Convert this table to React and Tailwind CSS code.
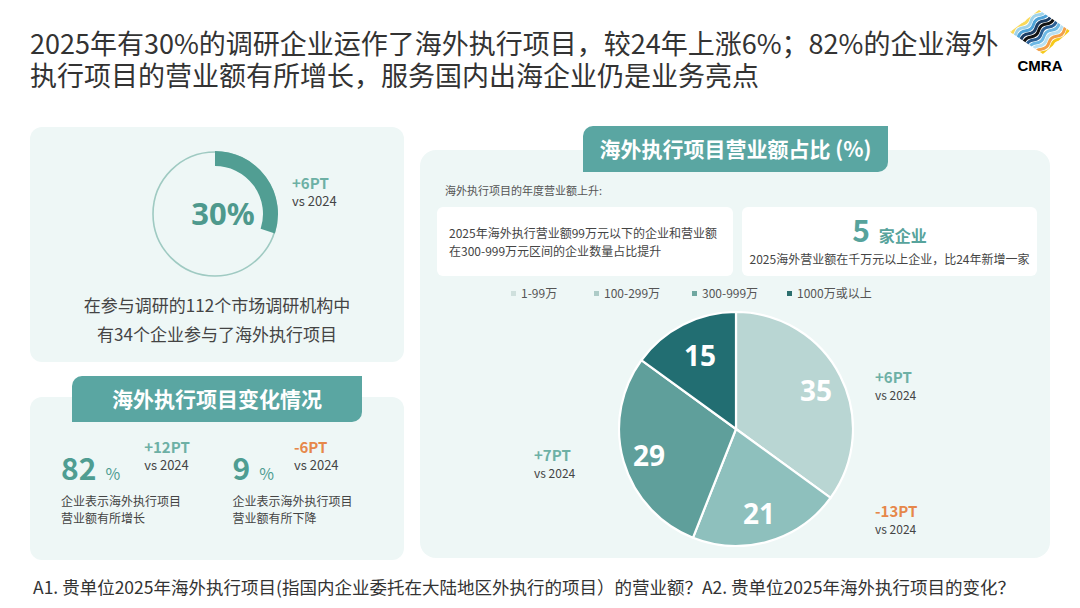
import React from 'react'

const font = "font-['Noto_Sans_CJK_SC','Noto_Sans',sans-serif]"

function Logo() {
  const stripes = [
    ['#f6c91a', -22],
    ['#f9d95a', -18],
    ['#9fd3ea', -14],
    ['#4fa3d8', -10],
    ['#1d3f66', -6],
    ['#111111', -2],
    ['#2b5f94', 2],
    ['#6db8e4', 6],
    ['#b9e0f2', 10],
    ['#f3a04a', 14],
    ['#f6c91a', 18],
    ['#fbe08a', 22],
  ]
  return (
    <div className="flex flex-col items-center w-[64px]">
      <svg width="60" height="44" viewBox="0 0 60 44">
        <defs>
          <clipPath id="dia">
            <polygon points="29,0 60,21 33,44 0,22" />
          </clipPath>
        </defs>
        <g clipPath="url(#dia)">
          <g transform="rotate(-40 30 22)">
            {stripes.map(([c, o], i) => (
              <path
                key={i}
                d={`M-30 ${22 + o} q 5 -3.5 10 0 t 10 0 t 10 0 t 10 0 t 10 0 t 10 0 t 10 0 t 10 0 t 10 0 t 10 0 t 10 0 t 10 0`}
                stroke={c}
                strokeWidth="3"
                fill="none"
              />
            ))}
          </g>
        </g>
      </svg>
      <div className="font-['Liberation_Sans',sans-serif] font-bold text-[15px] leading-[16px] text-black mt-[4px]">CMRA</div>
    </div>
  )
}

function Donut() {
  return (
    <svg width="130" height="130" viewBox="0 0 130 130">
      <circle cx="65" cy="65" r="62" fill="none" stroke="#9fcac2" strokeWidth="1.6" />
      <path d="M65 9.5 A55.5 55.5 0 0 1 117.78 82.15" fill="none" stroke="#519e93" strokeWidth="15" />
      <text x="73" y="64" textAnchor="middle" dominantBaseline="central" fontSize="31" fontWeight="700" fill="#4e998d" fontFamily="Noto Sans, sans-serif">30%</text>
    </svg>
  )
}

const slices = [
  { v: 35, c: '#b9d6d3', lx: 198, ly: 79 },
  { v: 21, c: '#8ec0bd', lx: 141, ly: 202 },
  { v: 29, c: '#5f9f9b', lx: 31, ly: 144 },
  { v: 15, c: '#226e72', lx: 82, ly: 44 },
]

function Pie() {
  const cx = 118, cy = 118, r = 117
  let acc = 0
  const pt = (a) => [cx + r * Math.sin(a * Math.PI / 180), cy - r * Math.cos(a * Math.PI / 180)]
  return (
    <svg width="236" height="236" viewBox="0 0 236 236">
      {slices.map((s, i) => {
        const a0 = acc * 3.6
        acc += s.v
        const a1 = acc * 3.6
        const [x0, y0] = pt(a0)
        const [x1, y1] = pt(a1)
        const large = a1 - a0 > 180 ? 1 : 0
        return (
          <path key={i} d={`M${cx} ${cy} L${x0} ${y0} A${r} ${r} 0 ${large} 1 ${x1} ${y1} Z`} fill={s.c} stroke="#ffffff" strokeWidth="2.2" strokeLinejoin="round" />
        )
      })}
      {slices.map((s, i) => (
        <text key={i} x={s.lx} y={s.ly} textAnchor="middle" dominantBaseline="central" fontSize="28" fontWeight="700" fill="#ffffff" fontFamily="Noto Sans, sans-serif">{s.v}</text>
      ))}
    </svg>
  )
}

function Delta({ value, up = true, size = 'text-[15px]', sub = 'text-[13px]' }) {
  return (
    <div className="flex flex-col">
      <div className={`${size} leading-[18px] font-bold ${up ? 'text-[#6db0a5]' : 'text-[#e6874a]'}`}>{value}</div>
      <div className={`${sub} leading-[18px] text-[#444]`}>vs 2024</div>
    </div>
  )
}

function Change({ num, delta, up, lines }) {
  return (
    <div className="w-[179px] flex flex-col">
      <div className="flex items-start">
        <div className="flex items-baseline mt-[14px]">
          <span className="text-[30px] leading-[30px] font-bold text-[#4f9d92]">{num}</span>
          <span className="text-[16px] text-[#4f9d92] ml-[9px]">%</span>
        </div>
        <div className={num.length > 1 ? 'ml-[24px]' : 'ml-[20px]'}>
          <Delta value={delta} up={up} />
        </div>
      </div>
      <div className="mt-[7px] text-[12px] leading-[17px] text-[#444]">
        {lines.map((l) => <div key={l}>{l}</div>)}
      </div>
    </div>
  )
}

export default function App() {
  const legend = [
    ['1-99万', '#cfe0dd', 'w-[83px]'],
    ['100-299万', '#adcbc7', 'w-[98px]'],
    ['300-999万', '#6fa7a0', 'w-[95px]'],
    ['1000万或以上', '#2c6f6e', ''],
  ]

  return (
    <div className={`w-[1080px] h-[608px] bg-white overflow-hidden ${font}`}>
      {/* header */}
      <div className="h-[126px] flex justify-between pl-[30px] pr-[8px] pt-[27px]">
        <h1 className="text-[27px] leading-[32px] text-[#333] font-normal">
          <div className="whitespace-nowrap">2025年有30%的调研企业运作了海外执行项目，较24年上涨6%；82%的企业海外</div>
          <div className="whitespace-nowrap">执行项目的营业额有所增长，服务国内出海企业仍是业务亮点</div>
        </h1>
        <div className="-mt-[17px]">
          <Logo />
        </div>
      </div>

      <div className="flex pl-[30px]">
        {/* left column */}
        <div className="w-[374px] flex flex-col">
          <div className="mt-[1px] h-[235px] rounded-xl bg-[#eef7f6] flex flex-col">
            <div className="flex pl-[120px] pt-[22px]">
              <Donut />
              <div className="ml-[12px] mt-[25px]">
                <Delta value="+6PT" />
              </div>
            </div>
            <div className="mt-[11px] text-center text-[17px] leading-[29px] text-[#444]">
              <div>在参与调研的112个市场调研机构中</div>
              <div>有34个企业参与了海外执行项目</div>
            </div>
          </div>

          <div className="mt-[14px] relative z-10 ml-[42px] w-[290px] h-[46px] bg-[#5aa6a2] rounded-tl-[10px] rounded-br-[10px] flex items-center justify-center text-white text-[21px] font-bold">
            海外执行项目变化情况
          </div>
          <div className="-mt-[25px] h-[163px] rounded-xl bg-[#eef7f6] pl-[31px] pt-[41px] flex">
            <Change num="82" delta="+12PT" up lines={['企业表示海外执行项目', '营业额有所增长']} />
            <Change num="9" delta="-6PT" up={false} lines={['企业表示海外执行项目', '营业额有所下降']} />
          </div>
        </div>

        {/* right column */}
        <div className="ml-[16px] w-[630px] flex flex-col">
          <div className="relative z-10 ml-[163px] w-[305px] h-[46px] bg-[#5aa6a2] rounded-tl-[10px] rounded-br-[10px] flex items-center justify-center text-white text-[21px] font-bold whitespace-nowrap">
            海外执行项目营业额占比 (%)
          </div>
          <div className="-mt-[22px] h-[408px] rounded-2xl bg-[#eef7f6] pl-[17px] pr-[13px] pt-[32px]">
            <div className="ml-[8px] text-[11px] leading-[16px] text-[#555]">海外执行项目的年度营业额上升:</div>
            <div className="mt-[9px] flex gap-[9px]">
              <div className="w-[296px] h-[69px] bg-white rounded-md pl-[12px] flex flex-col justify-center text-[12px] leading-[18px] text-[#444]">
                <div className="whitespace-nowrap">2025年海外执行营业额99万元以下的企业和营业额</div>
                <div>在300-999万元区间的企业数量占比提升</div>
              </div>
              <div className="w-[295px] h-[69px] bg-white rounded-md flex flex-col items-center justify-center">
                <div className="flex items-baseline text-[#57a39c] font-bold leading-[28px]">
                  <span className="text-[30px]">5</span>
                  <span className="text-[16px] ml-[9px]">家企业</span>
                </div>
                <div className="text-[12px] leading-[18px] text-[#444] whitespace-nowrap mt-[1px]">2025海外营业额在千万元以上企业，比24年新增一家</div>
              </div>
            </div>

            <div className="mt-[9px] ml-[74px] flex text-[12px] leading-[16px] text-[#555]">
              {legend.map(([t, c, w]) => (
                <div key={t} className={`flex items-center ${w}`}>
                  <span className="w-[5px] h-[5px] mr-[5px]" style={{ backgroundColor: c }} />
                  <span>{t}</span>
                </div>
              ))}
            </div>

            <div className="mt-[10px] flex">
              <div className="w-[181px] pl-[97px] pt-[135px]">
                <Delta value="+7PT" sub="text-[12px]" />
              </div>
              <Pie />
              <div className="pl-[21px] flex flex-col">
                <div className="mt-[57px]">
                  <Delta value="+6PT" sub="text-[12px]" />
                </div>
                <div className="mt-[98px]">
                  <Delta value="-13PT" up={false} sub="text-[12px]" />
                </div>
              </div>
            </div>
          </div>
        </div>
      </div>

      <div className="pl-[33px] mt-[15px] text-[17.5px] leading-[24px] text-[#333] whitespace-nowrap">
        A1. 贵单位2025年海外执行项目(指国内企业委托在大陆地区外执行的项目）的营业额？A2. 贵单位2025年海外执行项目的变化？
      </div>
    </div>
  )
}
